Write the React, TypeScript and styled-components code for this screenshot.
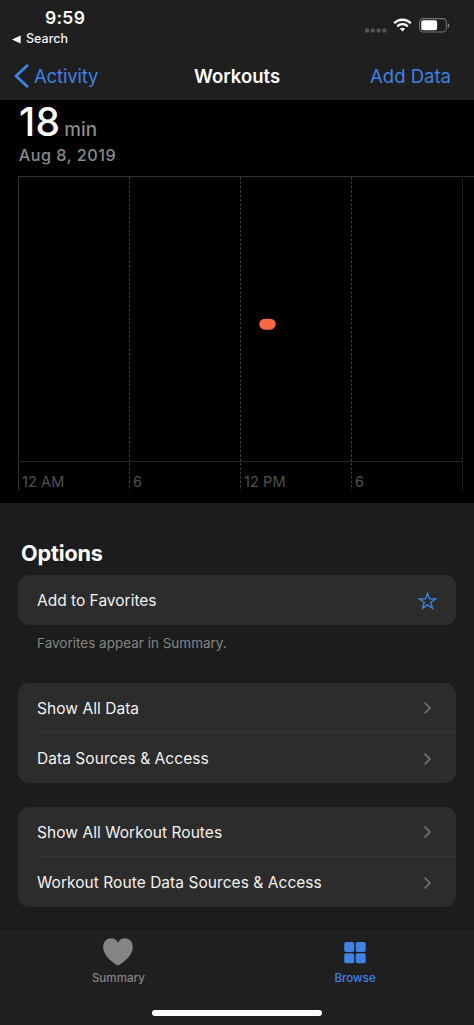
import React from "react";
import styled, { createGlobalStyle } from "styled-components";

const blue = "#3f82e4";

const GlobalStyle = createGlobalStyle`
  * { box-sizing: border-box; }
  body {
    margin: 0;
    background: #1c1c1c;
    font-family: Inter, "Liberation Sans", sans-serif;
    color: #f2f2f2;
  }
`;

const Screen = styled.div`
  width: 474px;
  height: 1025px;
  display: flex;
  flex-direction: column;
  overflow: hidden;
  background: #1c1c1c;
`;

const Text = styled.span<{ $size: number; $line: number; $weight?: number; $color?: string; $track?: number }>`
  display: block;
  white-space: nowrap;
  font-size: ${(p) => p.$size}px;
  line-height: ${(p) => p.$line}px;
  font-weight: ${(p) => p.$weight ?? 400};
  color: ${(p) => p.$color ?? "#f2f2f2"};
  letter-spacing: ${(p) => p.$track ?? 0}px;
`;

const Header = styled.header`
  height: 100px;
  flex: none;
  background: #1f1f1f;
  display: flex;
  flex-direction: column;
`;

const StatusBar = styled.div`
  height: 52px;
  display: flex;
  justify-content: space-between;
  padding: 8px 24px 0 12px;
`;

const StatusLeft = styled.div`
  display: flex;
  flex-direction: column;
`;

const Clock = styled.div`
  padding-left: 33px;
`;

const BackToApp = styled.div`
  display: flex;
  align-items: center;
  gap: 5px;
  height: 20px;
  margin-top: 1px;
`;

const StatusIcons = styled.div`
  display: flex;
  align-items: flex-start;
  padding-top: 10px;
`;

const BatterySlot = styled.div`
  display: flex;
  margin-left: 7px;
`;

const NavBar = styled.nav`
  height: 48px;
  display: grid;
  grid-template-columns: 1fr auto 1fr;
  align-items: center;
  padding: 0 23px 0 14px;
`;

const NavTitle = styled.div`
  margin-left: 9px;
`;

const BackButton = styled.div`
  display: flex;
  align-items: center;
  gap: 5px;
`;

const NavAction = styled.div`
  justify-self: end;
`;

const ChartPanel = styled.section`
  height: 403px;
  flex: none;
  background: #000;
  padding: 1px 0 0 18px;
`;

const Duration = styled.div`
  display: flex;
  align-items: baseline;
  gap: 4px;
  height: 43px;
  padding-left: 1px;
`;

const DateLine = styled.div`
  padding-left: 0.8px;
`;

const Chart = styled.div`
  margin-top: 10px;
  height: 314px;
  svg { display: block; }
`;

const Axis = styled.div`
  display: grid;
  grid-template-columns: repeat(4, 111px);
  padding-left: 4px;
  margin-top: -18px;
`;

const Options = styled.main`
  flex: 1;
  padding: 37px 18px 0;
`;

const SectionTitle = styled.div`
  padding-left: 3px;
`;

const Card = styled.div<{ $gap?: number }>`
  background: #2c2c2c;
  border-radius: 11px;
  margin-top: ${(p) => p.$gap ?? 0}px;
  padding-left: 19px;
`;

const Row = styled.div<{ $divided?: boolean; $height?: number }>`
  height: ${(p) => p.$height ?? 50}px;
  display: flex;
  align-items: center;
  justify-content: space-between;
  padding: 1px 24px 0 0;
  border-top: ${(p) => (p.$divided ? "1px solid #353535" : "none")};
`;

const RowLabel = styled.div`
  padding-top: 1px;
`;

const StarSlot = styled.div`
  display: flex;
  margin-right: -5px;
`;

const Caption = styled.div`
  padding: 8px 0 0 19px;
`;

const TabBar = styled.footer`
  height: 94px;
  flex: none;
  background: #1f1f1f;
  border-top: 1px solid #262626;
  display: flex;
  flex-direction: column;
  align-items: center;
`;

const Tabs = styled.div`
  display: grid;
  grid-template-columns: 1fr 1fr;
  width: 100%;
  height: 78px;
  padding-right: 0.5px;
`;

const Tab = styled.div`
  display: flex;
  flex-direction: column;
  align-items: center;
  padding-top: 5px;
`;

const HomeIndicator = styled.div`
  width: 170px;
  height: 6px;
  border-radius: 3px;
  background: #fff;
`;

const Chevron = () => (
  <svg width="9" height="14" viewBox="0 0 9 14" fill="none" stroke="#6c6c6c" strokeWidth="1.8">
    <path d="M1.6 1.6 7 7 1.6 12.4" />
  </svg>
);

const Wifi = () => (
  <svg width="19" height="14" viewBox="0 0 19 14" fill="none" stroke="#fff" strokeWidth="2.3">
    <path d="M1.2 5.2C5.8.6 13.2.6 17.8 5.2" />
    <path d="M4.2 8.3c3-2.8 7.6-2.8 10.6 0" />
    <path d="M6.9 10.7c1.5-1.4 3.7-1.4 5.2 0L9.5 13.6Z" fill="#fff" stroke="none" />
  </svg>
);

const Battery = () => (
  <svg width="31" height="15" viewBox="0 0 31 15">
    <rect x=".6" y=".6" width="26.8" height="13.4" rx="3.8" fill="none" stroke="#747474" strokeWidth="1.1" />
    <rect x="2.3" y="2.3" width="15.8" height="10" rx="2" fill="#fff" />
    <path d="M28.8 5v5c1.8-.7 1.8-4.3 0-5Z" fill="#8a8a8a" />
  </svg>
);

const NavRow = ({ label, divided }: { label: string; divided?: boolean }) => (
  <Row $divided={divided} $height={divided ? 51 : 49}>
    <RowLabel>
      <Text $size={15.5} $line={24} $track={0.05}>{label}</Text>
    </RowLabel>
    <Chevron />
  </Row>
);

export default function App() {
  return (
    <Screen>
      <GlobalStyle />
      <Header>
        <StatusBar>
          <StatusLeft>
            <Clock>
              <Text $size={17.5} $line={20} $weight={600} $color="#fff" $track={0.3}>9:59</Text>
            </Clock>
            <BackToApp>
              <svg width="9" height="9" viewBox="0 0 9 9"><path d="M0 4.5 8.7.4v8.2Z" fill="#fff" /></svg>
              <Text $size={12.5} $line={20} $weight={500}>Search</Text>
            </BackToApp>
          </StatusLeft>
          <StatusIcons>
            <svg width="28" height="16" viewBox="0 0 28 16" fill="#555">
              {[0, 5.8, 11.6, 17.4].map((x) => <rect key={x} x={x} y="10.5" width="4" height="4" rx="1" />)}
            </svg>
            <Wifi />
            <BatterySlot>
              <Battery />
            </BatterySlot>
          </StatusIcons>
        </StatusBar>
        <NavBar>
          <BackButton>
            <svg width="15" height="24" viewBox="0 0 15 24" fill="none" stroke={blue} strokeWidth="2.9" strokeLinecap="round" strokeLinejoin="round">
              <path d="M13 1.7 2 12l11 10.3" />
            </svg>
            <Text $size={18.5} $line={24} $color={blue} $track={-0.15}>Activity</Text>
          </BackButton>
          <NavTitle>
            <Text $size={18.5} $line={24} $weight={600} $color="#fff">Workouts</Text>
          </NavTitle>
          <NavAction>
            <Text $size={18.5} $line={24} $color={blue}>Add Data</Text>
          </NavAction>
        </NavBar>
      </Header>

      <ChartPanel>
        <Duration>
          <Text $size={39} $line={42} $weight={500} $color="#fff" $track={0.3}>18</Text>
          <Text $size={18.8} $line={24} $weight={500} $color="#8a8a8a">min</Text>
        </Duration>
        <DateLine>
          <Text $size={16.2} $line={22} $weight={500} $color="#8a8a8a" $track={0.5}>Aug 8, 2019</Text>
        </DateLine>
        <Chart>
          <svg width="456" height="314" viewBox="18 176 456 314" fill="none" strokeWidth="1">
            <path d="M18 176.5H474" stroke="#333" />
            <path d="M18.5 176V490" stroke="#303030" />
            <path d="M18 461.5H462" stroke="#262626" />
            <path d="M462.5 176V490" stroke="#1c1c1c" />
            <path d="M129.5 177V491M240.5 177V491M351.5 177V491" stroke="#404040" strokeDasharray="2.5 1.9" />
            <rect x="259.3" y="318.7" width="16.4" height="11" rx="5.5" fill="#f9693f" />
          </svg>
        </Chart>
        <Axis>
          {["12 AM", "6", "12 PM", "6"].map((label, i) => (
            <Text key={i} $size={14.5} $line={20} $color="#505050" $track={0.1}>{label}</Text>
          ))}
        </Axis>
      </ChartPanel>

      <Options>
        <SectionTitle>
          <Text $size={21.6} $line={26} $weight={700} $color="#fff" $track={-0.15}>Options</Text>
        </SectionTitle>
        <Card $gap={9}>
          <Row>
            <Text $size={15.5} $line={24}>Add to Favorites</Text>
            <StarSlot>
              <svg width="19" height="18" viewBox="0 0 19 18" fill="none" stroke={blue} strokeWidth="1.3">
                <path d="m9.5 1.2 2 5.6 6.1.1-4.9 3.7 1.9 5.8-5.1-3.5-5.1 3.5 1.9-5.8L1.4 6.9 7.5 6.8Z" />
              </svg>
            </StarSlot>
          </Row>
        </Card>
        <Caption>
          <Text $size={13.5} $line={20} $color="#858585">Favorites appear in Summary.</Text>
        </Caption>
        <Card $gap={30}>
          <NavRow label="Show All Data" />
          <NavRow label="Data Sources & Access" divided />
        </Card>
        <Card $gap={24}>
          <NavRow label="Show All Workout Routes" />
          <NavRow label="Workout Route Data Sources & Access" divided />
        </Card>
      </Options>

      <TabBar>
        <Tabs>
          <Tab>
            <svg width="30" height="30" viewBox="0 0 30 30" fill="#858585">
              <path d="M15 28.2C13.3 28.2.2 19.8.2 9.9.2 4.9 3.6 1.2 8 1.2c3.2 0 5.7 1.6 7 4.2 1.3-2.6 3.8-4.2 7-4.2 4.4 0 7.8 3.7 7.8 8.7C29.8 19.8 16.7 28.2 15 28.2Z" />
            </svg>
            <Text $size={11.6} $line={22} $weight={500} $color="#858585">Summary</Text>
          </Tab>
          <Tab>
            <svg width="30" height="30" viewBox="0 0 30 30" fill={blue}>
              <rect x="4.2" y="5" width="10" height="10" rx="1.8" />
              <rect x="15.7" y="5" width="10" height="10" rx="1.8" />
              <rect x="4.2" y="16.2" width="10" height="10" rx="1.8" />
              <rect x="15.7" y="16.2" width="10" height="10" rx="1.8" />
            </svg>
            <Text $size={11.6} $line={22} $weight={500} $color={blue}>Browse</Text>
          </Tab>
        </Tabs>
        <HomeIndicator />
      </TabBar>
    </Screen>
  );
}
